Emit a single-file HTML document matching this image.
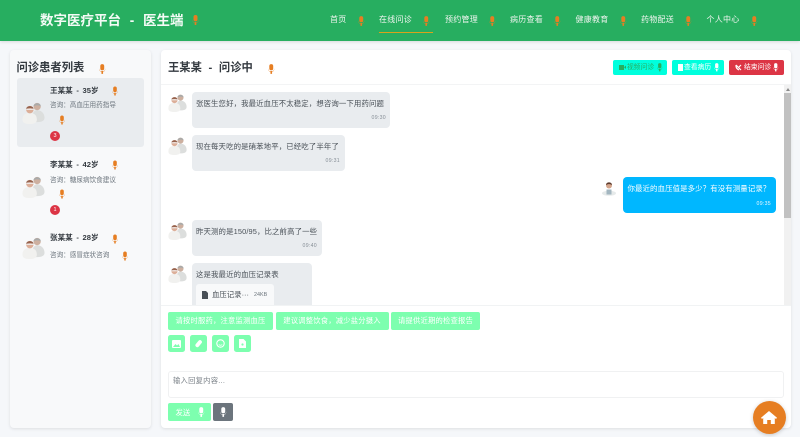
<!DOCTYPE html>
<html lang="zh">
<head>
<meta charset="utf-8">
<title>数字医疗平台 - 医生端</title>
<style>
html,body{margin:0;padding:0;width:800px;height:437px;overflow:hidden;background:#f5f7fa;}
body{position:relative;font-family:"Liberation Sans","Noto Sans CJK SC",sans-serif;color:#343a40;}
#w{position:absolute;left:0;top:0;width:800px;height:437px;filter:blur(.35px);}
.a{position:absolute;white-space:nowrap;line-height:1;}
.box{position:absolute;box-sizing:border-box;}
svg{position:absolute;overflow:visible;}
.nav{color:#f0f5f0;font-size:8px;letter-spacing:.25px;}
.msg{font-size:7.4px;color:#495057;letter-spacing:.13px;}
.t{font-size:5.2px;color:#868e96;letter-spacing:.3px;}
.nm{font-size:7.6px;font-weight:bold;color:#343a40;word-spacing:1.5px;}
.cs{font-size:6.6px;color:#6c757d;}
.q{background:#7dffaf;border-radius:2px;color:#fff;font-size:7.3px;text-align:center;line-height:18px;height:18px;top:312px;letter-spacing:.2px;}
.ib{background:#7dffaf;border-radius:2.5px;top:335px;height:17px;}
.bd{background:#e9ecef;border-radius:4px;}
.btn{font-size:6.8px;top:64.5px;}
</style>
</head>
<body>
<svg width="0" height="0" style="position:absolute">
<defs>
<symbol id="mic" viewBox="0 0 8 12"><rect x="1.6" y="0" width="4.8" height="7.6" rx="2.4" fill="currentColor"/><path d="M.4 4.8C.4 8 2 9.4 4 9.400S7.600 8 7.600 4.800V6.500C7.600 8.500 5.500 10 4 10S.4 8.500 .4 6.500Z" fill="currentColor"/><rect x="3" y="8.500" width="2" height="3.500" fill="currentColor"/></symbol>
<symbol id="pp" viewBox="0 0 24 24">
<path d="M10 22C10 12 13 9.500 16 9.500S23.500 12 23.500 17.500C23.500 21 20 22 16 22Z" fill="#dcdedd"/>
<circle cx="15.800" cy="5.800" r="3.800" fill="#cdb0a0"/>
<path d="M12 5.500C12.200 1.300 19.600 1.300 19.600 5.500 17.500 4.200 14 4.200 12 5.500Z" fill="#a9aaa9"/>
<path d="M.5 19.500C.5 14 4 12.500 8 12.500S15.500 14 15.500 19.500C15.500 23 12 24 8 24S.5 23 .5 19.500Z" fill="#f1f1ef"/>
<circle cx="8.200" cy="9" r="3.900" fill="#dcae98"/>
<path d="M4.300 8.500C4.500 4.300 12 4.300 12.100 8.500 10 7.200 6.500 7.200 4.300 8.500Z" fill="#96634e"/>
<rect x="4.500" y="8" width="7.500" height="1.200" fill="#f3f3f3"/>
</symbol>
<symbol id="doc" viewBox="0 0 16 16">
<ellipse cx="8" cy="13.300" rx="7" ry="2.500" fill="#e6eaea"/>
<rect x="5.500" y="9.500" width="5" height="5" fill="#a3b6c0"/>
<circle cx="8" cy="5.500" r="3" fill="#d3a58c"/>
<path d="M5 5C5 1.500 11 1.500 11 5 9 3.800 7 3.800 5 5Z" fill="#5b3a2c"/>
</symbol>
</defs>
</svg>
<div id="w">

<!-- Header -->
<div class="box" style="left:0;top:0;width:800px;height:41px;background:#27ae60;box-shadow:0 1px 3px rgba(0,0,0,.12)"></div>
<div class="a" style="left:40px;top:13.500px;font-size:13.500px;font-weight:bold;color:#f4fbf6;word-spacing:5px">数字医疗平台 - 医生端</div>
<svg style="left:192px;top:15px;color:#e67e22" width="7" height="10"><use href="#mic" width="7" height="10"/></svg>

<div class="a nav" style="left:330px;top:16px">首页</div>
<svg style="left:358px;top:15.500px;color:#e67e22" width="6.500" height="10"><use href="#mic" width="6.500" height="10"/></svg>
<div class="a nav" style="left:379px;top:15.500px">在线问诊</div>
<svg style="left:423px;top:15.500px;color:#e67e22" width="6.500" height="10"><use href="#mic" width="6.500" height="10"/></svg>
<div class="box" style="left:379px;top:32px;width:54px;height:1px;background:#d9a21b"></div>
<div class="a nav" style="left:445px;top:16px">预约管理</div>
<svg style="left:489px;top:15.500px;color:#e67e22" width="6.500" height="10"><use href="#mic" width="6.500" height="10"/></svg>
<div class="a nav" style="left:510px;top:16px">病历查看</div>
<svg style="left:554px;top:15.500px;color:#e67e22" width="6.500" height="10"><use href="#mic" width="6.500" height="10"/></svg>
<div class="a nav" style="left:575.500px;top:16px">健康教育</div>
<svg style="left:620px;top:15.500px;color:#e67e22" width="6.500" height="10"><use href="#mic" width="6.500" height="10"/></svg>
<div class="a nav" style="left:641px;top:16px">药物配送</div>
<svg style="left:685px;top:15.500px;color:#e67e22" width="6.500" height="10"><use href="#mic" width="6.500" height="10"/></svg>
<div class="a nav" style="left:706.500px;top:16px">个人中心</div>
<svg style="left:751px;top:15.500px;color:#e67e22" width="6.500" height="10"><use href="#mic" width="6.500" height="10"/></svg>

<!-- Sidebar -->
<div class="box" style="left:10px;top:50px;width:141px;height:378px;background:#f8f9fa;border-radius:4px;box-shadow:0 1px 3px rgba(0,0,0,.1)"></div>
<div class="a" style="left:16.500px;top:63px;font-size:11.300px;font-weight:bold;color:#343a40">问诊患者列表</div>
<svg style="left:99px;top:63.500px;color:#e67e22" width="6.500" height="10"><use href="#mic" width="6.500" height="10"/></svg>

<div class="box" style="left:17px;top:78px;width:127px;height:69px;background:#e9ecef;border-radius:3px"></div>
<svg style="left:22px;top:101px" width="23" height="23"><use href="#pp" width="23" height="23"/></svg>
<div class="a nm" style="left:50px;top:86.500px">王某某 - 35岁</div>
<svg style="left:112px;top:86px;color:#e67e22" width="6" height="10"><use href="#mic" width="6" height="10"/></svg>
<div class="a cs" style="left:50px;top:102px;margin-top:1px">咨询：高血压用药指导</div>
<svg style="left:59px;top:115px;color:#e67e22" width="6" height="10"><use href="#mic" width="6" height="10"/></svg>
<div class="box" style="left:50px;top:131px;width:10px;height:10px;border-radius:50%;background:#dc3545;color:#fff;font-size:5.500px;text-align:center;line-height:10px">3</div>

<svg style="left:22px;top:175px" width="23" height="23"><use href="#pp" width="23" height="23"/></svg>
<div class="a nm" style="left:50px;top:160.500px">李某某 - 42岁</div>
<svg style="left:112px;top:160px;color:#e67e22" width="6" height="10"><use href="#mic" width="6" height="10"/></svg>
<div class="a cs" style="left:50px;top:177.500px">咨询：糖尿病饮食建议</div>
<svg style="left:59px;top:189px;color:#e67e22" width="6" height="10"><use href="#mic" width="6" height="10"/></svg>
<div class="box" style="left:50px;top:205px;width:10px;height:10px;border-radius:50%;background:#dc3545;color:#fff;font-size:5.500px;text-align:center;line-height:10px">1</div>

<svg style="left:22px;top:236px" width="23" height="23"><use href="#pp" width="23" height="23"/></svg>
<div class="a nm" style="left:50px;top:234px">张某某 - 28岁</div>
<svg style="left:112px;top:233.500px;color:#e67e22" width="6" height="10"><use href="#mic" width="6" height="10"/></svg>
<div class="a cs" style="left:50px;top:253px">咨询：感冒症状咨询</div>
<svg style="left:122px;top:250.500px;color:#e67e22" width="6" height="10"><use href="#mic" width="6" height="10"/></svg>

<!-- Main panel -->
<div class="box" style="left:161px;top:50px;width:630px;height:378px;background:#fff;border-radius:4px;box-shadow:0 1px 3px rgba(0,0,0,.1)"></div>
<div class="a" style="left:168px;top:63px;font-size:11.300px;font-weight:bold;color:#343a40;word-spacing:3.500px">王某某 - 问诊中</div>
<svg style="left:268px;top:64px;color:#e67e22" width="6.500" height="10"><use href="#mic" width="6.500" height="10"/></svg>
<div class="box" style="left:161px;top:84px;width:630px;height:1px;background:#f3f4f5"></div>

<div class="box" style="left:613px;top:60px;width:54px;height:15px;background:#0fd;border-radius:2px"></div>
<div class="box" style="left:619px;top:65px;width:5px;height:4.500px;background:#27ae60"></div>
<svg style="left:624px;top:65px" width="2" height="4.500" viewBox="0 0 2 4.500"><path d="M0 2.250L2 .5V4Z" fill="#27ae60"/></svg>
<div class="a btn" style="left:627px;color:#27ae60">视频问诊</div>
<svg style="left:657px;top:63px;color:#27ae60" width="5.500" height="8.500"><use href="#mic" width="5.500" height="8.500"/></svg>

<div class="box" style="left:672px;top:60px;width:52px;height:15px;background:#0fd;border-radius:2px"></div>
<div class="box" style="left:678px;top:64px;width:5px;height:6.500px;background:#fff"></div>
<div class="a btn" style="left:684px;color:#fff">查看病历</div>
<svg style="left:714px;top:63px;color:#fff" width="5.500" height="8.500"><use href="#mic" width="5.500" height="8.500"/></svg>

<div class="box" style="left:729px;top:60px;width:55px;height:15px;background:#dc3545;border-radius:2px"></div>
<svg style="left:735px;top:64px" width="7" height="7" viewBox="0 0 7 7"><path d="M1 1L6 6M1 1C.8 3 2 5 4 6M6 1L4 3" stroke="#fff" stroke-width="1.200" fill="none"/></svg>
<div class="a btn" style="left:744px;color:#fff">结束问诊</div>
<svg style="left:773px;top:63px;color:#fff" width="5.500" height="8.500"><use href="#mic" width="5.500" height="8.500"/></svg>

<!-- Scrollbar -->
<div class="box" style="left:784px;top:85px;width:7px;height:220px;background:#f1f1f1"></div>
<svg style="left:785.500px;top:87.500px" width="4" height="3" viewBox="0 0 4 3"><path d="M2 0L4 3H0Z" fill="#8a8a8a"/></svg>
<div class="box" style="left:784px;top:93px;width:7px;height:125px;background:#c1c1c1"></div>

<!-- Messages -->
<svg style="left:168px;top:93px" width="19" height="19"><use href="#pp" width="19" height="19"/></svg>
<div class="box bd" style="left:192px;top:92px;width:198px;height:36px"></div>
<div class="a msg" style="left:196px;top:99.500px">张医生您好，我最近血压不太稳定，想咨询一下用药问题</div>
<div class="a t" style="right:414px;top:116px">09:30</div>

<svg style="left:168px;top:136px" width="19" height="19"><use href="#pp" width="19" height="19"/></svg>
<div class="box bd" style="left:192px;top:135px;width:153px;height:36px"></div>
<div class="a msg" style="left:196px;top:142.500px">现在每天吃的是硝苯地平，已经吃了半年了</div>
<div class="a t" style="right:460px;top:159px">09:31</div>

<svg style="left:601px;top:180px" width="16" height="16"><use href="#doc" width="16" height="16"/></svg>
<div class="box" style="left:623px;top:177px;width:153px;height:36px;background:#00b7ff;border-radius:4px"></div>
<div class="a msg" style="left:627.500px;top:185px;color:#fff">你最近的血压值是多少？有没有测量记录？</div>
<div class="a t" style="right:29px;top:201.500px;color:#eaf8ff">09:35</div>

<svg style="left:168px;top:221px" width="19" height="19"><use href="#pp" width="19" height="19"/></svg>
<div class="box bd" style="left:192px;top:220px;width:130px;height:36px"></div>
<div class="a msg" style="left:196px;top:228px">昨天测的是150/95，比之前高了一些</div>
<div class="a t" style="right:483px;top:244px">09:40</div>

<svg style="left:168px;top:264px" width="19" height="19"><use href="#pp" width="19" height="19"/></svg>
<div class="box" style="left:192px;top:263px;width:120px;height:42px;background:#e9ecef;border-radius:4px 4px 0 0"></div>
<div class="a msg" style="left:196px;top:271px">这是我最近的血压记录表</div>
<div class="box" style="left:196px;top:284px;width:78px;height:21px;background:#f8f9fa;border-radius:3px 3px 0 0"></div>
<svg style="left:202px;top:291px" width="6" height="8" viewBox="0 0 6 8"><path d="M0 0H4L6 2V8H0Z" fill="#495057"/></svg>
<div class="a" style="left:212px;top:291px;font-size:7.400px;color:#495057">血压记录···</div>
<div class="a" style="left:254px;top:292.500px;font-size:5.400px;color:#6c757d">24KB</div>

<!-- Bottom -->
<div class="box" style="left:161px;top:305px;width:630px;height:1px;background:#f1f3f4"></div>
<div class="box q" style="left:168px;width:105px">请按时服药，注意监测血压</div>
<div class="box q" style="left:275.500px;width:113px">建议调整饮食，减少盐分摄入</div>
<div class="box q" style="left:391px;width:89px">请提供近期的检查报告</div>

<div class="box ib" style="left:168px;width:17px"></div>
<svg style="left:172px;top:339.500px" width="9" height="8" viewBox="0 0 9 8"><rect width="9" height="8" rx="1" fill="#fff"/><path d="M1 7L3.500 4 5 5.500 6.500 4 8 7Z" fill="#7dffaf"/></svg>
<div class="box ib" style="left:190px;width:17px"></div>
<svg style="left:194px;top:339px" width="9" height="9" viewBox="0 0 9 9"><rect x="2.800" y="0.500" width="3.800" height="8" rx="1.900" transform="rotate(40 4.500 4.500)" fill="#fff"/></svg>
<div class="box ib" style="left:212px;width:17px"></div>
<svg style="left:216px;top:339px" width="9" height="9" viewBox="0 0 9 9"><circle cx="4.500" cy="4.500" r="3.700" fill="none" stroke="#fff" stroke-width="1.100"/><path d="M2.800 5.500C3.500 6.500 5.500 6.500 6.200 5.500" stroke="#fff" stroke-width=".7" fill="none"/></svg>
<div class="box ib" style="left:234px;width:16.500px"></div>
<svg style="left:239px;top:339px" width="7" height="9" viewBox="0 0 7 9"><path d="M0 0H4.500L7 2.500V9H0Z" fill="#fff"/><circle cx="3.500" cy="5.500" r="1.100" fill="#7dffaf"/></svg>

<div class="box" style="left:168px;top:371px;width:616px;height:27px;background:#fff;border:1px solid #f0f1f2;border-radius:3px"></div>
<div class="a" style="left:173px;top:376.500px;font-size:7.300px;color:#7b8288;letter-spacing:.25px">输入回复内容...</div>

<div class="box" style="left:168px;top:403px;width:43px;height:18px;background:#7dffaf;border-radius:2px"></div>
<div class="a" style="left:175.500px;top:408.500px;font-size:7.400px;color:#fff">发送</div>
<svg style="left:198px;top:407px;color:#fff" width="6.500" height="10"><use href="#mic" width="6.500" height="10"/></svg>
<div class="box" style="left:213px;top:403px;width:20px;height:18px;background:#6c757d;border-radius:2px"></div>
<svg style="left:220px;top:407px;color:#fff" width="6.500" height="10"><use href="#mic" width="6.500" height="10"/></svg>

<!-- Home FAB -->
<div class="box" style="left:753px;top:401px;width:33px;height:33px;border-radius:50%;background:#e67e22;box-shadow:0 1px 4px rgba(0,0,0,.2)"></div>
<svg style="left:761px;top:410.500px" width="16" height="13" viewBox="0 0 16 13"><path d="M8 0L16 6.800 15 8 13.800 7V13H9.800V9H6.200V13H2.200V7L1 8 0 6.800Z" fill="#fff"/></svg>
</div>
</body>
</html>
